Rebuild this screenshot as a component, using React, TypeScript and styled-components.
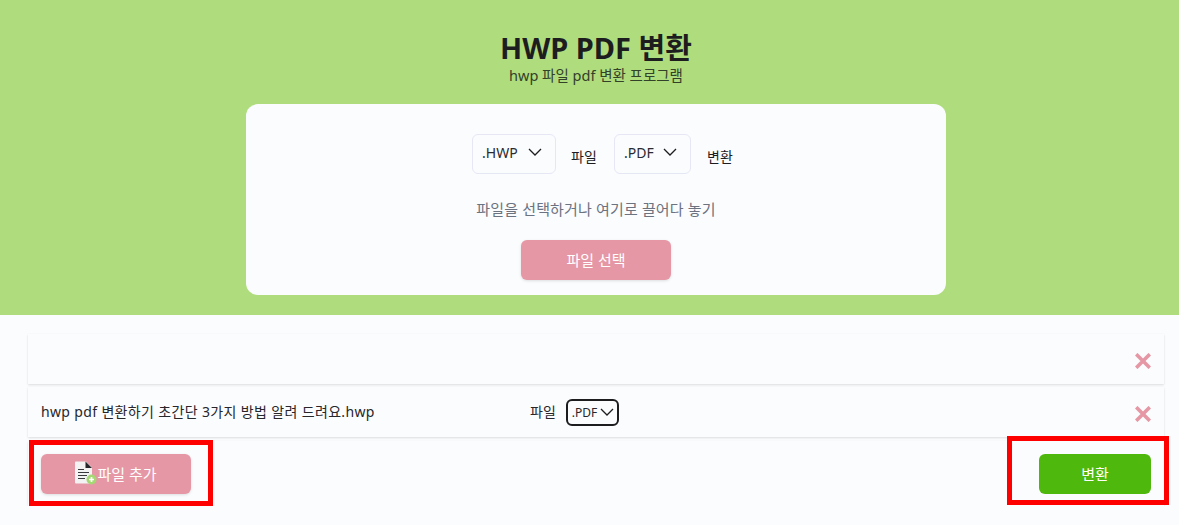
import React from 'react'
import styled, { createGlobalStyle } from 'styled-components'

const GlobalStyle = createGlobalStyle`
  html, body {
    margin: 0;
    padding: 0;
    background: #fbfcfe;
  }
  body {
    font-family: 'Noto Sans', 'Noto Sans CJK KR', sans-serif;
    color: #1d1d1f;
  }
  * {
    box-sizing: border-box;
  }
`

const Chevron = () => (
  <svg width="14" height="8" viewBox="0 0 14 8" fill="none">
    <path d="M1 1l6 6 6-6" stroke="#1d1d1f" strokeWidth="1.3" />
  </svg>
)

const CloseIcon = () => (
  <svg width="16" height="16" viewBox="0 0 16 16">
    <path d="M1.2 1.2l13.6 13.6M14.8 1.2L1.2 14.8" stroke="#e597a5" strokeWidth="3.6" />
  </svg>
)

const AddFileIcon = () => (
  <svg width="22" height="24" viewBox="0 0 22 24">
    <path d="M0 1.5a1 1 0 0 1 1-1h10l6 6v15a1 1 0 0 1-1 1H1a1 1 0 0 1-1-1z" fill="#f3f3f3" />
    <path d="M10.5.5l6.5 6.5h-6.5z" fill="#26262b" />
    <path d="M3 8.5h6M3 11.5h11M3 14.5h9M3 17.5h7" stroke="#3a3a3e" strokeWidth="1.2" />
    <circle cx="16.5" cy="18.5" r="5" fill="#a5d873" />
    <path d="M16.5 16v5M14 18.5h5" stroke="#fff" strokeWidth="1.7" />
  </svg>
)

export default function App() {
  return (
    <>
      <GlobalStyle />
      <Hero>
        <Title>HWP PDF 변환</Title>
        <Subtitle>hwp 파일 pdf 변환 프로그램</Subtitle>
        <Card>
          <ConvertRow>
            <FormatSelect $width={84}>
              .HWP
              <Chevron />
            </FormatSelect>
            <RowLabel>파일</RowLabel>
            <FormatSelect $width={77}>
              .PDF
              <Chevron />
            </FormatSelect>
            <RowLabel>변환</RowLabel>
          </ConvertRow>
          <Hint>파일을 선택하거나 여기로 끌어다 놓기</Hint>
          <PinkButton $width={150}>파일 선택</PinkButton>
        </Card>
      </Hero>
      <ListSection>
        <FileRow>
          <FileName />
          <RemoveSlot>
            <CloseIcon />
          </RemoveSlot>
        </FileRow>
        <FileRow>
          <FileName>hwp pdf 변환하기 초간단 3가지 방법 알려 드려요.hwp</FileName>
          <RowFormat>
            <FormatLabel>파일</FormatLabel>
            <SmallSelect>
              .PDF
              <Chevron />
            </SmallSelect>
          </RowFormat>
          <RemoveSlot>
            <CloseIcon />
          </RemoveSlot>
        </FileRow>
        <Footer>
          <PinkButton $width={150}>
            <AddFileIcon />
            파일 추가
          </PinkButton>
          <GreenButton>변환</GreenButton>
          <Highlight $left={1} $top={-1} $width={184} $height={66} />
          <Highlight $left={979} $top={-5} $width={162} $height={69} />
        </Footer>
      </ListSection>
    </>
  )
}

const Hero = styled.header`
  height: 315px;
  background: #afdd7d;
  display: flex;
  flex-direction: column;
  align-items: center;
  padding: 29px 0 0 13px;
`

const Title = styled.h1`
  margin: 0;
  font-size: 29px;
  line-height: 37px;
  font-weight: 700;
  color: #1d1d1f;
`

const Subtitle = styled.p`
  margin: 0;
  font-size: 14.5px;
  line-height: 18px;
  color: #33402a;
`

const Card = styled.section`
  width: 700px;
  height: 191px;
  margin-top: 20px;
  border-radius: 12px;
  background: #fbfcfe;
  display: flex;
  flex-direction: column;
  align-items: center;
  padding-top: 30px;
`

const ConvertRow = styled.div`
  display: flex;
  align-items: flex-start;
  height: 40px;
  margin-left: 15px;
`

const FormatSelect = styled.div<{ $width: number }>`
  width: ${(p) => p.$width}px;
  height: 40px;
  padding: 0 13px 4px 9px;
  display: flex;
  align-items: center;
  justify-content: space-between;
  border: 1px solid #e6e7f5;
  border-radius: 6px;
  font-size: 14px;
  color: #2a2a30;
`

const RowLabel = styled.span`
  width: 58px;
  padding: 13px 0 0 15px;
  font-size: 14px;
  line-height: 20px;
  white-space: nowrap;
  &:last-child {
    width: 44px;
    padding-left: 16px;
  }
`

const Hint = styled.p`
  margin: 25px 0 0;
  font-size: 15px;
  letter-spacing: 0.15px;
  line-height: 20px;
  color: #6b7280;
`

const PinkButton = styled.button<{ $width: number }>`
  width: ${(p) => p.$width}px;
  height: 40px;
  margin-top: 21px;
  padding: 0 0 2px;
  border: 0;
  border-radius: 6px;
  background: #e597a5;
  color: #fff;
  font: inherit;
  font-size: 15px;
  display: flex;
  align-items: center;
  justify-content: center;
  box-shadow: 0 1px 3px rgba(0, 0, 0, 0.12);
`

const GreenButton = styled.button`
  width: 112px;
  height: 40px;
  padding: 0 0 2px;
  border: 0;
  border-radius: 6px;
  background: #4fb80c;
  color: #fff;
  font: inherit;
  font-size: 15px;
`

const ListSection = styled.section`
  padding: 19px 15px 0 28px;
  display: flex;
  flex-direction: column;
  gap: 3px;
`

const FileRow = styled.div`
  height: 50px;
  padding: 0 13px 0 13px;
  display: flex;
  align-items: center;
  background: #fbfcfe;
  box-shadow: 0 1px 2px rgba(0, 0, 0, 0.12), 0 0 1px rgba(0, 0, 0, 0.03);
`

const FileName = styled.span`
  width: 489px;
  padding-bottom: 2px;
  font-size: 14px;
  letter-spacing: 0.35px;
  white-space: nowrap;
  color: #26262b;
`

const RowFormat = styled.div`
  display: flex;
  align-items: center;
  gap: 10px;
  font-size: 14px;
  color: #26262b;
`

const FormatLabel = styled.span`
  padding-bottom: 3px;
`

const SmallSelect = styled.div`
  width: 53px;
  height: 27px;
  padding: 0 3px 0 4px;
  display: flex;
  align-items: center;
  justify-content: space-between;
  border: 2px solid #1d1d1f;
  border-radius: 6px;
  font-size: 12px;
`

const RemoveSlot = styled.div`
  margin-left: auto;
  padding-top: 4px;
  display: flex;
`

const Footer = styled.div`
  position: relative;
  height: 65px;
  margin-top: 1px;
  padding: 13px 13px 0 13px;
  display: flex;
  align-items: flex-start;
  justify-content: space-between;
  box-shadow: 0 1px 2px rgba(0, 0, 0, 0.12), 0 0 1px rgba(0, 0, 0, 0.03);

  ${PinkButton} {
    margin-top: 0;
  }
`

const Highlight = styled.div<{ $left: number; $top: number; $width: number; $height: number }>`
  position: absolute;
  top: ${(p) => p.$top}px;
  left: ${(p) => p.$left}px;
  width: ${(p) => p.$width}px;
  height: ${(p) => p.$height}px;
  border: 5px solid #ff0000;
`
